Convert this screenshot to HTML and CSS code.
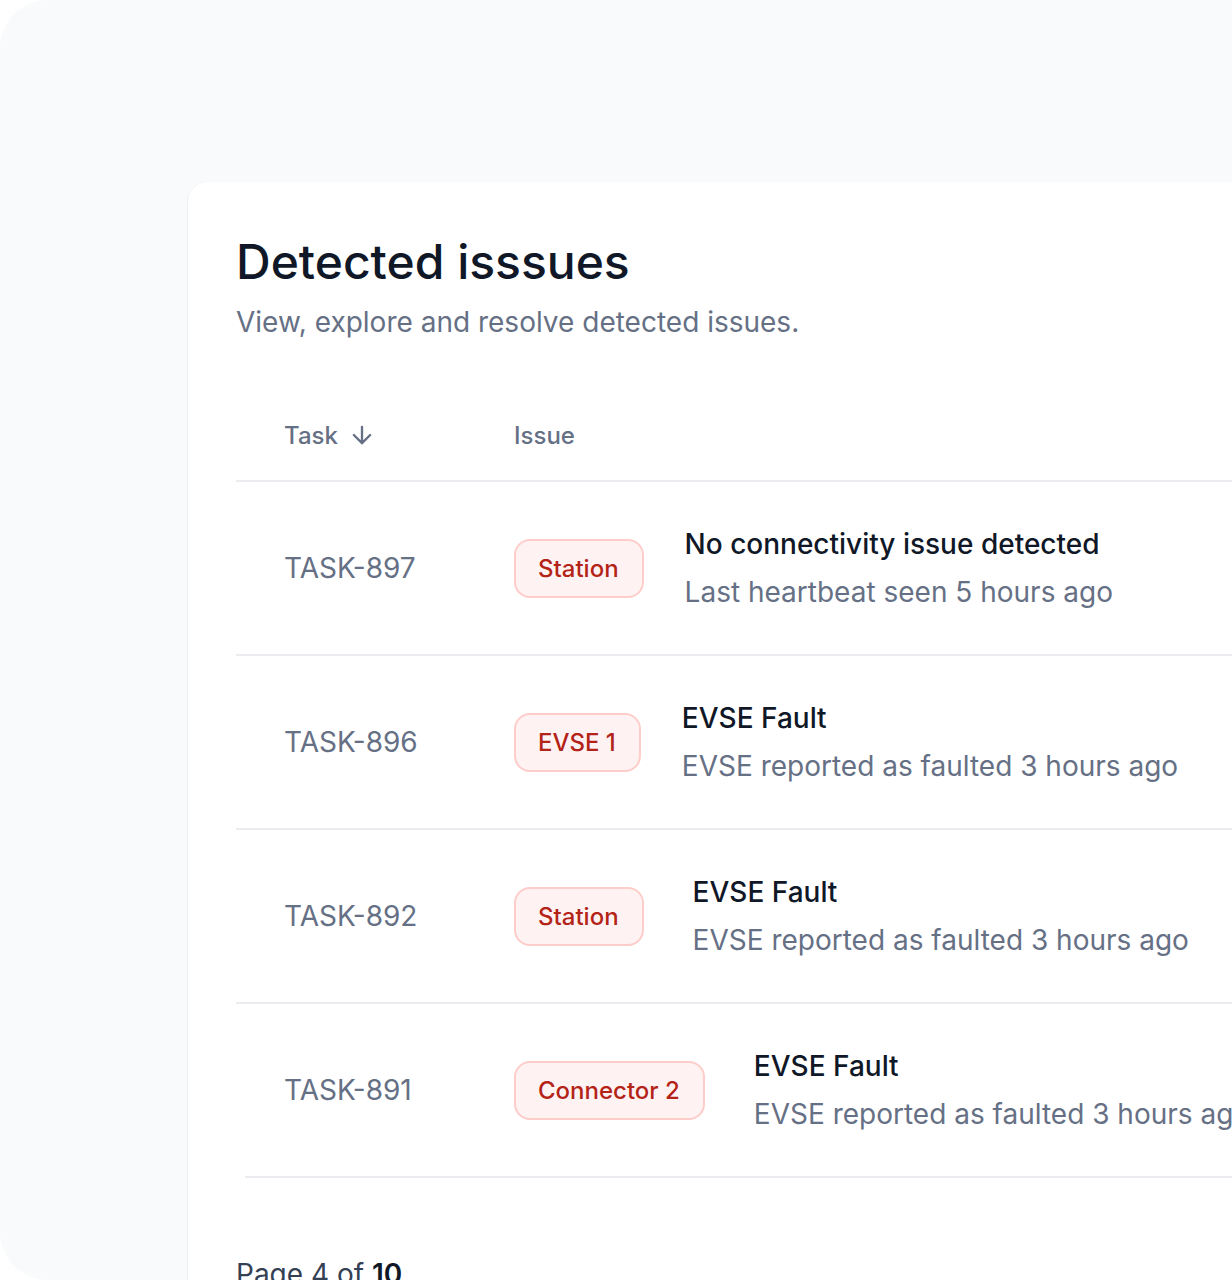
FILE: index.html
```html
<!DOCTYPE html>
<html lang="en">
<head>
<meta charset="utf-8">
<title>Detected issues</title>
<link rel="stylesheet" href="styles.css">
</head>
<body>
<div class="frame">
  <div class="card">
    <h1 class="title">Detected isssues</h1>
    <p class="subtitle">View, explore and resolve detected issues.</p>

    <div class="table">
      <div class="thead">
        <div class="col-task th">Task
          <svg class="sort" width="28" height="28" viewBox="0 0 24 24" fill="none" stroke="currentColor" stroke-width="2" stroke-linecap="round" stroke-linejoin="round"><path d="M12 5v14M19 12l-7 7-7-7"/></svg>
        </div>
        <div class="col-issue th">Issue</div>
      </div>

      <div class="row">
        <div class="col-task task-id">TASK-897</div>
        <div class="col-issue">
          <span class="badge">Station</span>
          <div class="info">
            <div class="info-title">No connectivity issue detected</div>
            <div class="info-sub">Last heartbeat seen 5 hours ago</div>
          </div>
        </div>
      </div>

      <div class="row">
        <div class="col-task task-id">TASK-896</div>
        <div class="col-issue">
          <span class="badge">EVSE 1</span>
          <div class="info">
            <div class="info-title">EVSE Fault</div>
            <div class="info-sub">EVSE reported as faulted 3 hours ago</div>
          </div>
        </div>
      </div>

      <div class="row">
        <div class="col-task task-id">TASK-892</div>
        <div class="col-issue wide-gap">
          <span class="badge">Station</span>
          <div class="info">
            <div class="info-title">EVSE Fault</div>
            <div class="info-sub">EVSE reported as faulted 3 hours ago</div>
          </div>
        </div>
      </div>

      <div class="row row-last">
        <div class="col-task task-id">TASK-891</div>
        <div class="col-issue wide-gap">
          <span class="badge">Connector 2</span>
          <div class="info">
            <div class="info-title">EVSE Fault</div>
            <div class="info-sub">EVSE reported as faulted 3 hours ago</div>
          </div>
        </div>
      </div>
      <div class="last-divider"></div>
    </div>

    <div class="pager">Page 4 of <strong>10</strong></div>
  </div>
</div>
</body>
</html>
```

FILE: styles.css
```css
* { box-sizing: border-box; }

html, body {
  margin: 0;
  padding: 0;
  background: #ffffff;
  overflow: hidden;
}

body {
  font-family: Inter, "Noto Sans", "Liberation Sans", sans-serif;
  color: #101828;
}

.frame {
  width: 1232px;
  height: 1280px;
  background: #f9fafb;
  border-radius: 48px 0 0 48px;
  overflow: hidden;
  padding: 182px 0 0 188px;
}

.card {
  width: 1200px;
  height: 1200px;
  background: #ffffff;
  border-radius: 20px;
  box-shadow: 0 1px 3px rgba(16, 24, 40, 0.08), 0 1px 2px rgba(16, 24, 40, 0.05);
  padding: 48px 0 0 48px;
}

.title {
  margin: 0;
  font-size: 48px;
  line-height: 64px;
  font-weight: 500;
  color: #101828;
}

.subtitle {
  margin: 8px 0 0;
  font-size: 28px;
  line-height: 40px;
  color: #667085;
}

.table {
  margin-top: 48px;
}

.thead {
  display: flex;
  align-items: center;
  height: 92px;
  border-bottom: 2px solid #eaecf0;
}

.th {
  font-size: 24px;
  font-weight: 500;
  color: #667085;
  display: flex;
  align-items: center;
  gap: 10px;
}

.sort {
  color: #667085;
}

.col-task {
  width: 278px;
  flex: none;
  padding-left: 48px;
}

.col-issue {
  display: flex;
  align-items: center;
  gap: 41px;
}

.col-issue.wide-gap {
  gap: 49px;
}

.row {
  display: flex;
  align-items: center;
  height: 174px;
  border-bottom: 2px solid #eaecf0;
}

.row.row-last {
  border-bottom: none;
  height: 172px;
}

.last-divider {
  height: 2px;
  margin-left: 9px;
  background: #eaecf0;
}

.task-id {
  font-size: 28px;
  line-height: 40px;
  color: #667085;
}

.badge {
  display: inline-block;
  padding: 10px 23px 10px 22px;
  font-size: 24px;
  line-height: 35px;
  font-weight: 500;
  color: #b42318;
  background: #fef3f2;
  border: 2px solid #fecdca;
  border-radius: 16px;
  white-space: nowrap;
}

.info {
  display: flex;
  flex-direction: column;
  gap: 8px;
  white-space: nowrap;
}

.info-title {
  font-size: 28px;
  line-height: 40px;
  font-weight: 500;
  color: #101828;
}

.info-sub {
  font-size: 28px;
  line-height: 40px;
  color: #667085;
}

.pager {
  margin-top: 76px;
  font-size: 28px;
  line-height: 40px;
  color: #344054;
}

.pager strong {
  font-weight: 600;
  color: #101828;
}
```
